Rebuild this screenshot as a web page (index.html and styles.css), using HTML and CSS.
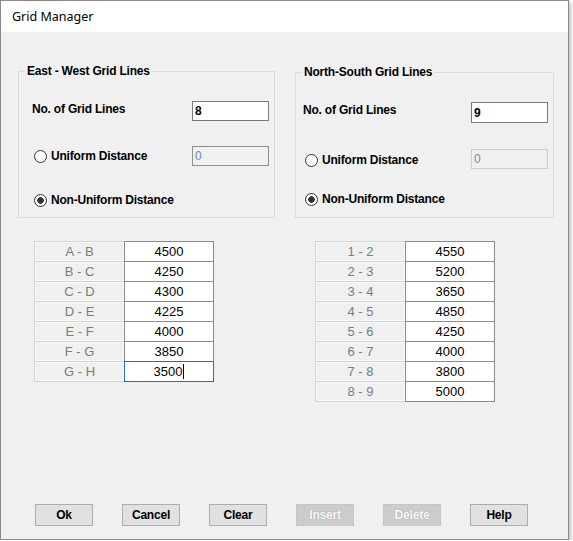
FILE: index.html
```html
<!DOCTYPE html>
<html lang="en">
<head>
    <meta charset="UTF-8">
    <meta name="viewport" content="width=device-width, initial-scale=1.0">
    <title>Grid Manager</title>
    <link rel="stylesheet" href="styles.css">
</head>
<body>
    <div class="window">
        <div class="titlebar">Grid Manager</div>

        <div class="panels">
            <div class="group group-ew">
                <span class="legend">East - West Grid Lines</span>
                <div class="row row-count">
                    <span class="label">No. of Grid Lines</span>
                    <input class="field" type="text" value="8">
                </div>
                <div class="row row-uniform">
                    <span class="option"><span class="radio"></span>Uniform Distance</span>
                    <input class="field disabled" type="text" value="0" disabled>
                </div>
                <div class="row row-nonuniform">
                    <span class="option"><span class="radio checked"></span>Non-Uniform Distance</span>
                </div>
            </div>

            <div class="group group-ns">
                <span class="legend">North-South Grid Lines</span>
                <div class="row row-count">
                    <span class="label">No. of Grid Lines</span>
                    <input class="field" type="text" value="9">
                </div>
                <div class="row row-uniform">
                    <span class="option"><span class="radio"></span>Uniform Distance</span>
                    <input class="field disabled light" type="text" value="0" disabled>
                </div>
                <div class="row row-nonuniform">
                    <span class="option"><span class="radio checked"></span>Non-Uniform Distance</span>
                </div>
            </div>
        </div>

        <div class="tables">
            <table class="grid">
                <tr><td class="name">A - B</td><td class="value">4500</td></tr>
                <tr><td class="name">B - C</td><td class="value">4250</td></tr>
                <tr><td class="name">C - D</td><td class="value">4300</td></tr>
                <tr><td class="name">D - E</td><td class="value">4225</td></tr>
                <tr><td class="name">E - F</td><td class="value">4000</td></tr>
                <tr><td class="name">F - G</td><td class="value">3850</td></tr>
                <tr><td class="name">G - H</td><td class="value focus">3500<span class="caret"></span></td></tr>
            </table>

            <table class="grid">
                <tr><td class="name">1 - 2</td><td class="value">4550</td></tr>
                <tr><td class="name">2 - 3</td><td class="value">5200</td></tr>
                <tr><td class="name">3 - 4</td><td class="value">3650</td></tr>
                <tr><td class="name">4 - 5</td><td class="value">4850</td></tr>
                <tr><td class="name">5 - 6</td><td class="value">4250</td></tr>
                <tr><td class="name">6 - 7</td><td class="value">4000</td></tr>
                <tr><td class="name">7 - 8</td><td class="value">3800</td></tr>
                <tr><td class="name">8 - 9</td><td class="value">5000</td></tr>
            </table>
        </div>

        <div class="buttons">
            <button class="btn">Ok</button>
            <button class="btn">Cancel</button>
            <button class="btn">Clear</button>
            <button class="btn" disabled>Insert</button>
            <button class="btn" disabled>Delete</button>
            <button class="btn">Help</button>
        </div>
    </div>
</body>
</html>
```

FILE: styles.css
```css
body {
    margin: 0;
    padding: 0;
    background-color: #fff;
    font-family: "Liberation Sans", Arial, sans-serif;
}

.window {
    width: 567px;
    height: 538px;
    border: 1px solid #8a8a8a;
    background-color: #f0f0f0; /* dialog grey */
    box-shadow: 2px 2px 4px rgba(0, 0, 0, 0.25);
    display: flex;
    flex-direction: column;
}

.titlebar {
    height: 31px;
    line-height: 31px;
    padding-left: 11px;
    background-color: #fff;
    font-family: "Noto Sans", "Open Sans", sans-serif;
    font-size: 12.5px;
    color: #000;
}

/* grid line groups */

.panels {
    display: flex;
    align-items: flex-start;
    gap: 20px;
    padding-left: 17px;
    margin-top: 39px;
}

.group {
    position: relative;
    box-sizing: border-box;
    border: 1px solid #dcdcdc;
    font-size: 12px;
    font-weight: bold;
    letter-spacing: -0.2px;
    color: #000;
}

.group-ew {
    width: 257px;
    height: 147px;
    padding: 29px 5px 0 13px;
}

.group-ns {
    width: 259px;
    height: 146px;
    margin-top: 1px;
    padding: 29px 5px 0 7px;
}

.legend {
    position: absolute;
    top: -8px;
    left: 6px;
    padding: 0 2px;
    line-height: 14px;
    background-color: #f0f0f0;
}

.row {
    display: flex;
    align-items: center;
    justify-content: space-between;
    height: 20px;
}

.group-ew .row-uniform { margin-top: 25px; }
.group-ew .row-nonuniform { margin-top: 24px; }
.group-ns .row-count { height: 21px; }
.group-ns .row-uniform { margin-top: 26px; }
.group-ns .row-nonuniform { margin-top: 20px; }
.group-ns .row-uniform .option { margin-top: 2px; }

.label {
    margin-bottom: 5px;
}

.option {
    display: flex;
    align-items: center;
    gap: 4px;
    margin-left: 2px;
}

.radio {
    width: 13px;
    height: 13px;
    box-sizing: border-box;
    border: 1px solid #333;
    border-radius: 50%;
    background-color: #fff;
}

.radio.checked {
    background: radial-gradient(circle, #333 3px, #fff 3.6px);
}

.field {
    width: 77px;
    height: 100%;
    box-sizing: border-box;
    margin: 0;
    padding: 0 0 0 2px;
    border: 1px solid #7a7a7a;
    background-color: #fff;
    font-family: "Liberation Sans", Arial, sans-serif;
    font-size: 12px;
    font-weight: bold;
    color: #000;
    outline: none;
}

.field.disabled {
    background-color: #f0f0f0;
    border-color: #8e8e8e;
    font-weight: normal;
    color: #7088a8;
}

.field.light {
    border-color: #cdcdcd;
}

/* distance tables */

.tables {
    display: flex;
    align-items: flex-start;
    gap: 101px;
    padding-left: 33px;
    margin-top: 23px;
}

.grid {
    border-spacing: 0;
    font-size: 13px;
}

.grid td {
    box-sizing: border-box;
    height: 20px;
    padding: 0;
    line-height: 15px;
    text-align: center;
    border-bottom: 1px solid #8c8c8c;
}

.grid tr:first-child td {
    border-top: 1px solid #8c8c8c;
    height: 21px;
}

.grid td.name {
    width: 90px;
    color: #7c7c7c;
    border-left: 1px solid #d4d4d4;
    border-bottom-color: #d4d4d4;
    box-shadow: inset 1px 1px 0 #fafafa, inset -1px -1px 0 #fafafa;
}

.grid tr:first-child td.name {
    border-top-color: #d4d4d4;
}

.grid td.value {
    width: 90px;
    color: #000;
    background-color: #fff;
    border-left: 1px solid #8c8c8c;
    border-right: 1px solid #8c8c8c;
}

.grid td.focus {
    border-color: #1a73c8;
    box-shadow: 0 -1px 0 #1a73c8;
}

.caret {
    display: inline-block;
    width: 1px;
    height: 15px;
    margin-left: 1px;
    background-color: #000;
    vertical-align: top;
}

/* bottom buttons */

.buttons {
    display: flex;
    gap: 29px;
    margin-top: auto;
    padding: 0 0 13px 34px;
}

.btn {
    width: 58px;
    height: 22px;
    margin: 0;
    padding: 0;
    border: 1px solid #adadad;
    background-color: #e1e1e1;
    font-family: "Liberation Sans", Arial, sans-serif;
    font-size: 12px;
    font-weight: bold;
    letter-spacing: -0.2px;
    color: #000;
}

.btn:disabled {
    border-color: #c6c6c6;
    background-color: #cccccc;
    color: #fafafa;
    text-shadow: 0 0 1px #8a8a8a;
}
```
